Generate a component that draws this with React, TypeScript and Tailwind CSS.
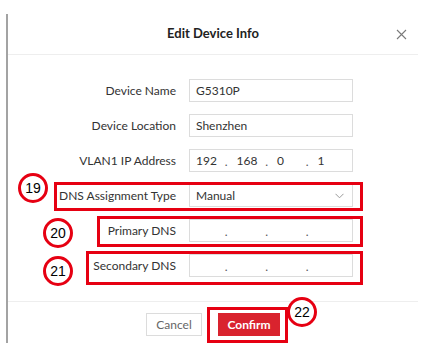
const labelCls = "w-[168px] shrink-0 text-right text-[12px] text-[#333333]";
const boxCls = "ml-[13px] w-[164px] h-[23px] border border-[#dcdcdc] bg-white flex items-center text-[12px] text-[#333333]";

function IpField({ parts }: { parts: string[] }) {
  return (
    <div className={boxCls}>
      {parts.map((p, i) => (
        <div key={i} className="w-[41px] h-full flex items-center justify-between pl-[6px] pr-[3px]">
          <span>{p}</span>
          {i < 3 && <span className="self-end pb-[3px] leading-none text-[#555555]">.</span>}
        </div>
      ))}
    </div>
  );
}

function Row({ label, children }: { label: string; children: React.ReactNode }) {
  return (
    <div className="flex items-center h-[23px]">
      <div className={labelCls}>{label}</div>
      {children}
    </div>
  );
}

function Marker({ n, className }: { n: string; className: string }) {
  return (
    <div
      className={
        "absolute w-[30px] h-[30px] rounded-full border-[3px] border-[#e60012] bg-white flex items-center justify-center text-[14px] text-black font-['Liberation_Sans',Arial,sans-serif] " +
        className
      }
    >
      {n}
    </div>
  );
}

export default function App() {
  return (
    <div className="relative w-[438px] h-[353px] bg-white overflow-hidden font-['Lato','Noto_Sans',sans-serif]">
      <div className="ml-[6px] mt-[14px] w-[412px] h-[329px] border-l-[2px] border-[#a3a3a3] flex flex-col">
        {/* header */}
        <div className="relative h-[41px] shrink-0 flex items-center justify-center border-b border-[#eeeeee]">
          <span className="text-[13px] font-bold text-[#222222]">Edit Device Info</span>
          <svg className="absolute right-[11px] top-[15px]" width="11" height="11" viewBox="0 0 11 11">
            <path d="M1 1L10 10M10 1L1 10" stroke="#7a7a7a" strokeWidth="1.1" />
          </svg>
        </div>

        {/* body */}
        <div className="pt-[24px] pb-[24px] flex flex-col gap-[12px] border-b border-[#eeeeee]">
          <Row label="Device Name">
            <div className={boxCls + " pl-[6px]"}>G5310P</div>
          </Row>
          <Row label="Device Location">
            <div className={boxCls + " pl-[6px]"}>Shenzhen</div>
          </Row>
          <Row label="VLAN1 IP Address">
            <IpField parts={["192", "168", "0", "1"]} />
          </Row>
          <Row label="DNS Assignment Type">
            <div className={boxCls + " pl-[6px] pr-[8px] justify-between"}>
              <span>Manual</span>
              <svg width="9" height="6" viewBox="0 0 9 6">
                <path d="M0.5 0.8L4.5 4.8L8.5 0.8" fill="none" stroke="#9a9a9a" strokeWidth="1" />
              </svg>
            </div>
          </Row>
          <Row label="Primary DNS">
            <IpField parts={["", "", "", ""]} />
          </Row>
          <Row label="Secondary DNS">
            <IpField parts={["", "", "", ""]} />
          </Row>
        </div>

        {/* footer */}
        <div className="pt-[11px] flex justify-center gap-[16px]">
          <button className="w-[56px] h-[23px] border border-[#dcdcdc] bg-white text-[12px] text-[#666666]">Cancel</button>
          <button className="w-[62px] h-[23px] bg-[#d9232e] text-[12px] font-bold text-white">Confirm</button>
        </div>
      </div>

      {/* annotations */}
      <div className="absolute left-[54px] top-[182px] w-[309px] h-[29px] border-[3px] border-[#e60012]" />
      <div className="absolute left-[97px] top-[216px] w-[266px] h-[31px] border-[3px] border-[#e60012]" />
      <div className="absolute left-[86px] top-[251px] w-[277px] h-[34px] border-[3px] border-[#e60012]" />
      <div className="absolute left-[207px] top-[307px] w-[81px] h-[36px] border-[3px] border-[#e60012]" />
      <Marker n="19" className="left-[18px] top-[173px]" />
      <Marker n="20" className="left-[43px] top-[218px]" />
      <Marker n="21" className="left-[43px] top-[256px]" />
      <Marker n="22" className="left-[287px] top-[297px]" />
    </div>
  );
}
